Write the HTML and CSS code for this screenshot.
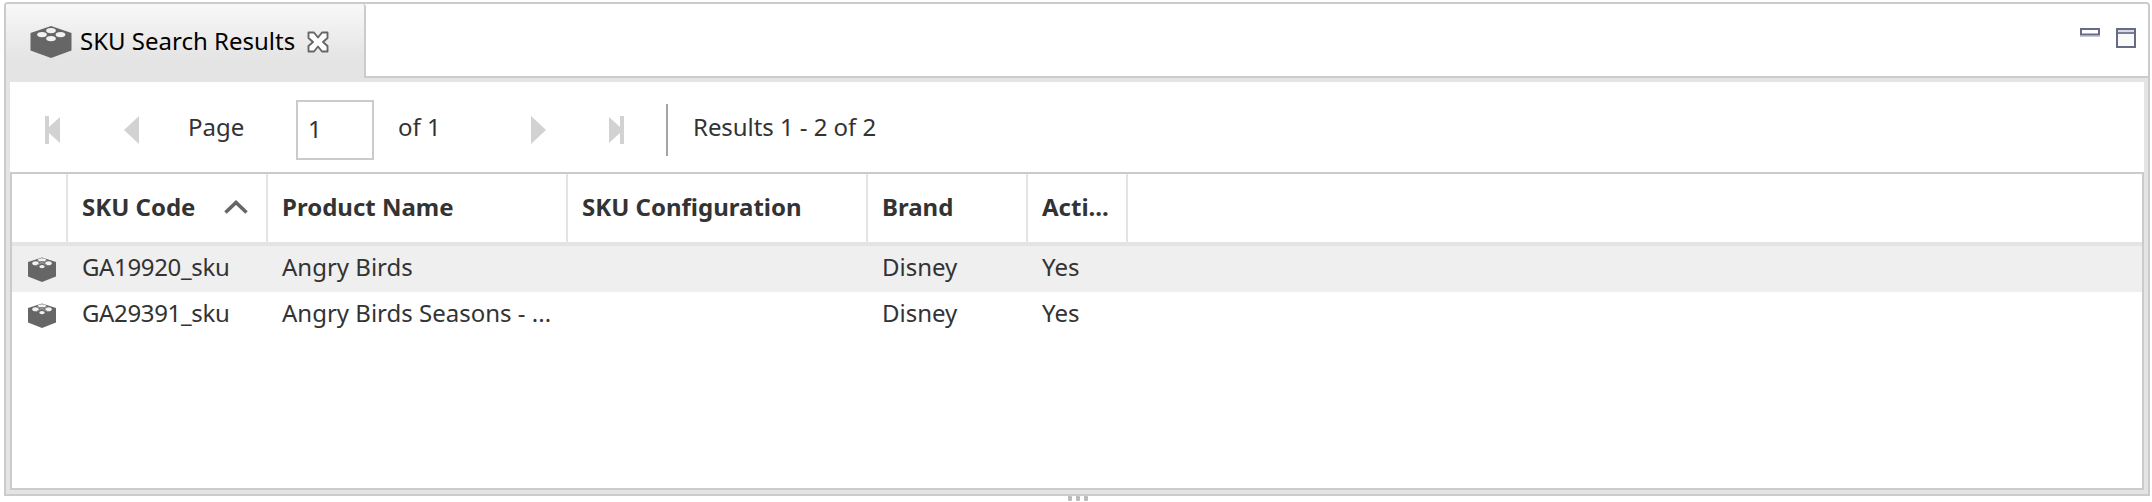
FILE: index.html
```html
<!DOCTYPE html>
<html lang="en">
<head>
<meta charset="utf-8">
<title>SKU Search Results</title>
<link rel="stylesheet" href="styles.css">
</head>
<body>
<svg class="defs" width="0" height="0">
  <symbol id="brick" viewBox="0 0 42 32">
    <path fill="#666" d="M21 0 41.500 7V24.500L21 32 .5 24.500V7Z"/>
    <g fill="#f2f2f2"><ellipse cx="21" cy="4.600" rx="4.800" ry="2.700"/><ellipse cx="12" cy="8.600" rx="4.800" ry="2.700"/><ellipse cx="30.500" cy="8.600" rx="4.800" ry="2.700"/><ellipse cx="21" cy="12.600" rx="4.800" ry="2.700"/></g>
  </symbol>
  <symbol id="brick-small" viewBox="0 0 28 25">
    <path fill="#666" d="M14 .5 28 5V19.500L14 25 0 19.500V5Z"/>
    <g fill="#f2f2f2"><ellipse cx="14" cy="2.800" rx="4" ry="1.500"/><ellipse cx="7.500" cy="6.300" rx="3.200" ry="2"/><ellipse cx="20.500" cy="6.300" rx="3.200" ry="2"/><ellipse cx="14" cy="9.600" rx="2.700" ry="1.600"/></g>
    <path d="M9 3.500 19 8M19 3.500 9 8" stroke="#999" stroke-width="1"/>
  </symbol>
</svg>
<main class="panel">
  <header class="tabs">
    <div class="tab">
      <svg class="tab-icon"><use href="#brick"/></svg>
      <span class="tab-title">SKU Search Results</span>
      <svg class="close" viewBox="0 0 22 22"><path d="M1.500 1.500H7L11 6.500 15 1.500H20.500V7L16 11 20.500 15V20.500H15L11 15.500 7 20.500H1.500V15L6 11 1.500 7Z" fill="#fff" stroke="#666" stroke-width="1.900" stroke-linejoin="round"/></svg>
    </div>
    <div class="window-tools">
      <svg class="minimize" viewBox="0 0 20 9"><path d="M0 7.500H20V9H0Z" fill="#c9ccd4"/><path d="M1 1H19V6.500H1Z" fill="#fff" stroke="#666c88" stroke-width="2"/></svg>
      <svg class="maximize" viewBox="0 0 20 20"><path d="M1 1H19V19H1Z" fill="#fafaf8" stroke="#666c88" stroke-width="2"/><path d="M2 2H18V4H2Z" fill="#d9dbe2"/><path d="M2 4H18V6H2Z" fill="#7b8098"/></svg>
    </div>
  </header>
  <section class="content">
    <div class="toolbar">
      <svg class="nav first" viewBox="0 0 15 28"><path d="M0 0H4V11L15 1V27L4 17V28H0Z"/></svg>
      <svg class="nav prev" viewBox="0 0 15 28"><path d="M0 14 15 0V28Z"/></svg>
      <span class="page-label">Page</span>
      <div class="page-input">1</div>
      <span class="page-total">of 1</span>
      <svg class="nav next" viewBox="0 0 15 28"><path d="M15 14 0 0V28Z"/></svg>
      <svg class="nav last" viewBox="0 0 15 28"><path d="M15 0H11V11L0 1V27L11 17V28H15Z"/></svg>
      <i class="separator"></i>
      <span class="result-count">Results 1 - 2 of 2</span>
    </div>
    <div class="table">
      <div class="row head">
        <div class="cell"></div>
        <div class="cell">SKU Code<svg class="sort" viewBox="0 0 24 14"><path d="M1.500 12.500 12 2.500 22.500 12.500" fill="none" stroke="#666" stroke-width="3.600"/></svg></div>
        <div class="cell">Product Name</div>
        <div class="cell">SKU Configuration</div>
        <div class="cell">Brand</div>
        <div class="cell">Acti...</div>
      </div>
      <div class="row selected">
        <div class="cell icon-cell"><svg class="row-icon"><use href="#brick-small"/></svg></div>
        <div class="cell code">GA19920_sku</div>
        <div class="cell">Angry Birds</div>
        <div class="cell"></div>
        <div class="cell">Disney</div>
        <div class="cell">Yes</div>
      </div>
      <div class="row">
        <div class="cell icon-cell"><svg class="row-icon"><use href="#brick-small"/></svg></div>
        <div class="cell code">GA29391_sku</div>
        <div class="cell">Angry Birds Seasons - ...</div>
        <div class="cell"></div>
        <div class="cell">Disney</div>
        <div class="cell">Yes</div>
      </div>
    </div>
  </section>
</main>
<div class="grip"><i></i><i></i><i></i></div>
</body>
</html>
```
FILE: styles.css
```css
* { box-sizing: border-box; }
body {
  margin: 0;
  padding: 2px 2px 0 4px;
  height: 502px;
  overflow: hidden;
  background: #fff;
  color: #333;
  font: 24px/32px "Noto Sans", sans-serif;
  white-space: nowrap;
}
svg { display: block; flex: none; }
.defs { position: absolute; }
.panel {
  display: flex;
  flex-direction: column;
  height: 494px;
  border: 2px solid #cbcbcb;
  border-radius: 4px 4px 0 0;
  background: #e4e4e4;
}
.tabs {
  display: flex;
  height: 74px;
  background: #fff;
  border-radius: 2px 2px 0 0;
}
.tab {
  display: flex;
  width: 360px;
  height: 74px;
  padding: 0 0 0 24px;
  border-right: 2px solid #cbcbcb;
  border-radius: 2px 3px 0 0;
  background: linear-gradient(#f8f8f8, #e4e4e4 75%);
  color: #000;
}
.tab-icon { width: 42px; height: 32px; margin-top: 22px; }
.tab-title { width: 215px; margin: 21px 12px 0 8px; }
.close { width: 22px; height: 22px; margin-top: 27px; }
.window-tools {
  display: flex;
  flex: 1;
  justify-content: flex-end;
  gap: 16px;
  padding: 24px 12px 0 0;
  border-bottom: 2px solid #cbcbcb;
}
.minimize { width: 20px; height: 9px; }
.maximize { width: 20px; height: 20px; }
.content {
  display: flex;
  flex: 1;
  flex-direction: column;
  margin: 4px;
}
.toolbar { display: flex; height: 90px; background: #fff; }
.nav { width: 15px; height: 28px; margin-top: 34px; fill: #d2d2d2; }
.first { margin-left: 35px; }
.prev { margin-left: 64px; }
.page-label { width: 56px; margin: 29px 0 0 49px; }
.page-input {
  width: 78px;
  height: 60px;
  margin: 18px 0 0 52px;
  padding: 11px 0 0 10px;
  border: 2px solid #cbcbcb;
}
.page-total { width: 42px; margin: 29px 0 0 24px; }
.next { margin-left: 91px; }
.last { margin-left: 63px; }
.separator { width: 2px; height: 52px; margin: 22px 0 0 42px; background: #a3a4a8; }
.result-count { margin: 29px 0 0 25px; letter-spacing: -.05px; }
.table { flex: 1; border: 2px solid #cbcbcb; background: #fff; }
.row {
  display: grid;
  grid-template-columns: 56px 200px 300px 300px 160px 100px;
  height: 46px;
}
.cell { padding: 5px 0 0 14px; }
.code { letter-spacing: -.35px; }
.head { height: 72px; border-bottom: 4px solid #e4e4e4; font-weight: 700; }
.head .cell {
  display: flex;
  justify-content: space-between;
  padding: 17px 18px 0 14px;
  border-right: 2px solid #e4e4e4;
}
.sort { width: 24px; height: 14px; margin-top: 9px; }
.selected { background: #efefef; }
.icon-cell { padding: 11px 0 0 16px; }
.row-icon { width: 28px; height: 25px; }
.grip { display: flex; gap: 4px; margin-left: 1064px; }
.grip i { width: 4px; height: 5px; border-radius: 1px; background: #bbb; }
```
